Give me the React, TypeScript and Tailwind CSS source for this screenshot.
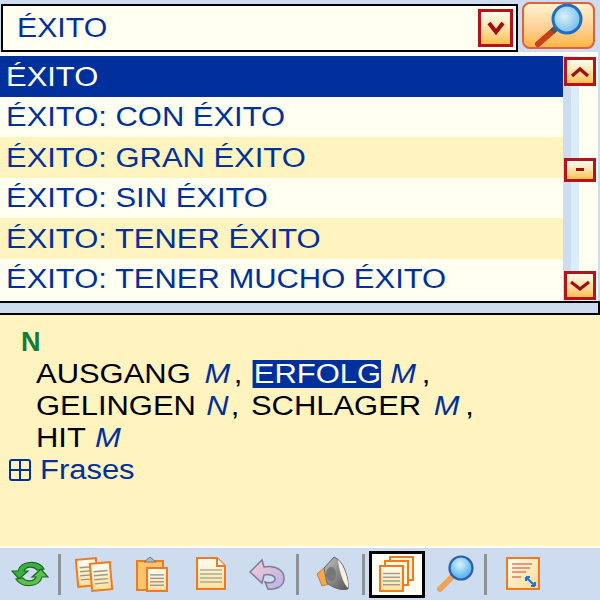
import React from "react";

const rows = [
  "ÉXITO",
  "ÉXITO: CON ÉXITO",
  "ÉXITO: GRAN ÉXITO",
  "ÉXITO: SIN ÉXITO",
  "ÉXITO: TENER ÉXITO",
  "ÉXITO: TENER MUCHO ÉXITO",
];

function ArrowButton({ kind, className }: { kind: "up" | "down" | "drop" | "thumb"; className: string }) {
  return (
    <div className={`border-[3px] border-[#b5121b] bg-gradient-to-b from-[#fffdf0] via-[#ffe2a8] to-[#ffc04d] flex items-center justify-center ${className}`}>
      <svg width="20" height="14" viewBox="0 0 20 14">
        {kind === "up" && <path d="M2 11 L10 4 L18 11" fill="none" stroke="#a00d12" strokeWidth="3.2" />}
        {kind === "down" && <path d="M1 3 L10 10 L19 3" fill="none" stroke="#a00d12" strokeWidth="3.2" />}
        {kind === "drop" && <path d="M3 2 L10 11 L17 2" fill="none" stroke="#a00d12" strokeWidth="4" />}
        {kind === "thumb" && <rect x="6" y="5" width="8" height="3" fill="#a00d12" />}
      </svg>
    </div>
  );
}

function SearchGlyph() {
  return (
    <svg width="60" height="46" viewBox="0 0 60 46">
      <defs>
        <radialGradient id="lens" cx="0.4" cy="0.4" r="0.7">
          <stop offset="0" stopColor="#d8f0fb" />
          <stop offset="1" stopColor="#6db8e8" />
        </radialGradient>
      </defs>
      <path d="M9 41 L25 27" stroke="#c8401a" strokeWidth="6" strokeLinecap="round" />
      <path d="M23 29 L28 24" stroke="#555" strokeWidth="6" />
      <circle cx="38" cy="16" r="14" fill="url(#lens)" stroke="#1f6fc0" strokeWidth="3" />
    </svg>
  );
}

function Divider({ className }: { className: string }) {
  return <div className={`w-[3px] h-[41px] bg-[#8e9296] ${className}`} />;
}

function Refresh() {
  return (
    <svg width="38" height="32" viewBox="0 0 38 32">
      <path d="M7 13 C9 3 27 1 33 11 L26 12 C23 8 15 8 13 13 L17 13 L8 21 L1 13 Z" fill="#3fae3f" stroke="#146b1c" strokeWidth="1.2" />
      <path d="M31 19 C29 29 11 31 5 21 L12 20 C15 24 23 24 25 19 L21 19 L30 11 L37 19 Z" fill="#5cc04c" stroke="#146b1c" strokeWidth="1.2" />
    </svg>
  );
}

function Sheet({ x, y, w, h, tilt = 0 }: { x: number; y: number; w: number; h: number; tilt?: number }) {
  const lines = [0.3, 0.45, 0.6, 0.75];
  return (
    <g transform={`rotate(${tilt} ${x + w / 2} ${y + h / 2})`}>
      <rect x={x} y={y} width={w} height={h} fill="url(#paper)" stroke="#f07a1c" strokeWidth="2" />
      {lines.map((l) => (
        <line key={l} x1={x + 3} x2={x + w - 3} y1={y + h * l} y2={y + h * l} stroke="#9a9a88" strokeWidth="1.4" />
      ))}
    </g>
  );
}

function PaperDefs() {
  return (
    <defs>
      <linearGradient id="paper" x1="0" y1="0" x2="0" y2="1">
        <stop offset="0" stopColor="#fffdf2" />
        <stop offset="1" stopColor="#ffdf9e" />
      </linearGradient>
    </defs>
  );
}

function CopyDocs() {
  return (
    <svg width="38" height="40" viewBox="0 0 38 40">
      <PaperDefs />
      <Sheet x={2} y={5} w={20} h={27} tilt={-5} />
      <Sheet x={16} y={9} w={20} h={27} tilt={-5} />
    </svg>
  );
}

function Clipboard() {
  return (
    <svg width="34" height="38" viewBox="0 0 34 38">
      <PaperDefs />
      <rect x="2" y="6" width="26" height="29" fill="#ffc36e" stroke="#f07a1c" strokeWidth="2" />
      <path d="M9 7 L15 2 L21 7 Z" fill="#b8b8b8" stroke="#777" />
      <Sheet x={12} y={13} w={20} h={23} />
    </svg>
  );
}

function Page() {
  return (
    <svg width="32" height="36" viewBox="0 0 32 36">
      <PaperDefs />
      <path d="M2 2 H22 L30 10 V33 H2 Z" fill="url(#paper)" stroke="#f07a1c" strokeWidth="2" />
      <path d="M22 2 V10 H30" fill="#fff" stroke="#f07a1c" strokeWidth="2" />
      {[14, 18, 22, 26].map((y) => (
        <line key={y} x1="5" x2="27" y1={y} y2={y} stroke="#a8a890" strokeWidth="1.4" />
      ))}
    </svg>
  );
}

function Undo() {
  return (
    <svg width="38" height="34" viewBox="0 0 38 34">
      <defs>
        <linearGradient id="undo" x1="0" y1="0" x2="1" y2="1">
          <stop offset="0" stopColor="#f6c9d8" />
          <stop offset="1" stopColor="#b9b4e6" />
        </linearGradient>
      </defs>
      <path d="M1 15 L13 3 L15 10 C28 8 36 14 35 23 C34 30 26 33 19 32 L16 25 C22 27 27 25 26 21 C25 18 19 17 15 18 L13 26 Z" fill="url(#undo)" stroke="#7d7d98" strokeWidth="1.5" />
    </svg>
  );
}

function Speaker() {
  return (
    <svg width="34" height="36" viewBox="0 0 34 36">
      <defs>
        <linearGradient id="spk" x1="0" y1="0" x2="1" y2="1">
          <stop offset="0" stopColor="#c4c4c4" />
          <stop offset="1" stopColor="#555" />
        </linearGradient>
      </defs>
      <path d="M1 18 L8 12 L13 28 L6 30 Z" fill="#f0a850" stroke="#c78434" />
      <path d="M8 12 L18 1 C28 5 33 22 32 33 C24 35 16 31 11 27 Z" fill="url(#spk)" stroke="#666" />
      <path d="M22 4 C28 9 33 24 32 32 C27 28 23 14 22 4 Z" fill="#f4f0e4" />
      <ellipse cx="15" cy="18" rx="5" ry="7" fill="#777" />
    </svg>
  );
}

function Pages() {
  return (
    <svg width="36" height="36" viewBox="0 0 36 36">
      <PaperDefs />
      <path d="M11 1 H34 V24 H11 Z" fill="#fff7e0" stroke="#f07a1c" strokeWidth="2" />
      <path d="M6 5 H29 V29 H6 Z" fill="#fff7e0" stroke="#f07a1c" strokeWidth="2" />
      <Sheet x={1} y={10} w={23} h={25} />
    </svg>
  );
}

function SmallLens() {
  return (
    <svg width="40" height="38" viewBox="0 0 40 38">
      <defs>
        <radialGradient id="lens2" cx="0.45" cy="0.35" r="0.7">
          <stop offset="0" stopColor="#d8f3fd" />
          <stop offset="1" stopColor="#38a6ea" />
        </radialGradient>
      </defs>
      <path d="M4 34 L16 22" stroke="#eea35a" strokeWidth="6" strokeLinecap="round" />
      <circle cx="25" cy="13" r="11.5" fill="url(#lens2)" stroke="#2e5fa8" strokeWidth="2.2" />
    </svg>
  );
}

function Resize() {
  return (
    <svg width="34" height="34" viewBox="0 0 34 34">
      <defs>
        <linearGradient id="rs" x1="0" y1="0" x2="1" y2="1">
          <stop offset="0" stopColor="#fffdf2" />
          <stop offset="1" stopColor="#ffd98e" />
        </linearGradient>
      </defs>
      <rect x="1" y="1" width="32" height="31" fill="url(#rs)" stroke="#f07a1c" strokeWidth="2" />
      {[
        [6, 26, 7],
        [6, 24, 11],
        [6, 20, 15],
        [6, 15, 20],
      ].map(([a, b, y]) => (
        <line key={y} x1={a} x2={b} y1={y} y2={y} stroke="#e0705a" strokeWidth="1.4" />
      ))}
      <path d="M20 20 L29 29 M20 20 H24 M20 20 V24 M29 29 H25 M29 29 V25" stroke="#1a78d8" strokeWidth="2.2" fill="none" />
    </svg>
  );
}

export default function App() {
  return (
    <div className="w-[600px] h-[600px] overflow-hidden flex flex-col bg-[#cddcee] text-[27px] leading-none" style={{ fontFamily: '"Liberation Sans", Arial, sans-serif' }}>
      <div className="h-[52px] flex pl-px pt-[4px] relative">
        <div className="w-[517px] h-[48px] bg-[#fffff2] border-2 border-black flex items-center justify-between pl-[14px] pr-[3px]">
          <span className="text-[#00309c] inline-block origin-left scale-x-[1.12]">ÉXITO</span>
          <ArrowButton kind="drop" className="w-[35px] h-[38px]" />
        </div>
        <div className="absolute left-[522px] top-[2px] w-[73px] h-[47px] rounded-[8px] border-2 border-[#e2603a] bg-gradient-to-b from-[#fff3cf] via-[#ffd49c] to-[#ffb640] flex items-center justify-center">
          <SearchGlyph />
        </div>
      </div>

      <div className="h-[249px] bg-[#fffff2] flex">
        <div className="w-[563px] pt-[4px]">
          {rows.map((row, i) => (
            <div
              key={row}
              className={`h-[40.5px] pl-[6px] pt-[2px] flex items-center ${
                i === 0 ? "bg-[#00309c] text-white" : i % 2 === 0 ? "bg-[#fff3c0] text-[#00309c]" : "bg-[#fffff2] text-[#00309c]"
              }`}
            >
              <span className="inline-block origin-left scale-x-[1.146]">{row}</span>
            </div>
          ))}
        </div>
        <div className="w-[37px] relative">
          <div className="absolute left-0 top-[4px] w-[8px] h-[245px] bg-[#cddcee]" />
          <div className="absolute left-[8px] top-[4px] w-[8px] h-[245px] bg-[#d9eef8]" />
          <div className="absolute right-0 top-0 w-[2px] h-[249px] bg-[#cddcee]" />
          <div className="relative flex flex-col pt-[5px] pl-px">
            <ArrowButton kind="up" className="w-[32px] h-[29px]" />
            <ArrowButton kind="thumb" className="w-[32px] h-[24px] mt-[72px]" />
            <ArrowButton kind="down" className="w-[32px] h-[29px] mt-[89px]" />
          </div>
        </div>
      </div>

      <div className="h-[14px] border-t-2 border-b-2 border-r-2 border-black bg-[#cddcee]" />

      <div className="h-[231px] bg-[#fff3c0] text-black pt-[11px]">
        <div className="pl-[21px] h-[32px] font-bold text-[#127a3a] flex items-center">N</div>
        <div className="ml-[36px] h-[32px] flex items-center origin-left scale-x-[1.146]">
          AUSGANG<i className="text-[#00309c] ml-[12px]">M</i><span className="ml-[3px]">,</span>
          <span className="bg-[#00309c] text-white ml-[9px] h-[28px] flex items-center pl-px">ERFOLG</span>
          <i className="text-[#00309c] ml-[8px]">M</i><span className="ml-[5px]">,</span>
        </div>
        <div className="ml-[36px] h-[32px] flex items-center origin-left scale-x-[1.146]">
          GELINGEN<i className="text-[#00309c] ml-[9px]">N</i><span className="ml-[2px]">,</span><span className="ml-[10px]">SCHLAGER</span>
          <i className="text-[#00309c] ml-[11px]">M</i><span className="ml-[5px]">,</span>
        </div>
        <div className="ml-[36px] h-[32px] flex items-center origin-left scale-x-[1.146]">
          HIT<i className="text-[#00309c] ml-[8px]">M</i>
        </div>
        <div className="pl-[9px] h-[32px] flex items-center gap-[9px] text-[#00309c]">
          <svg width="22" height="22" viewBox="0 0 22 22">
            <rect x="1" y="1" width="20" height="20" rx="2" fill="none" stroke="#00309c" strokeWidth="2" />
            <path d="M11 1 V21 M1 11 H21" stroke="#00309c" strokeWidth="2" />
          </svg>
          <span className="inline-block origin-left scale-x-[1.146]">Frases</span>
        </div>
      </div>

      <div className="h-[54px] border-t-2 border-white bg-[#cddcee] flex items-center pl-[11px]">
        <Refresh />
        <Divider className="ml-[9px] mr-[14px]" />
        <CopyDocs />
        <div className="ml-[22px]"><Clipboard /></div>
        <div className="ml-[26px]"><Page /></div>
        <div className="ml-[22px]"><Undo /></div>
        <Divider className="ml-[9px] mr-[17px]" />
        <Speaker />
        <Divider className="ml-[12px] mr-[4px]" />
        <div className="w-[56px] h-[47px] border-[3px] border-black bg-[#fffff2] flex items-center justify-center"><Pages /></div>
        <div className="ml-[11px]"><SmallLens /></div>
        <Divider className="ml-[8px] mr-[19px]" />
        <Resize />
      </div>
    </div>
  );
}
